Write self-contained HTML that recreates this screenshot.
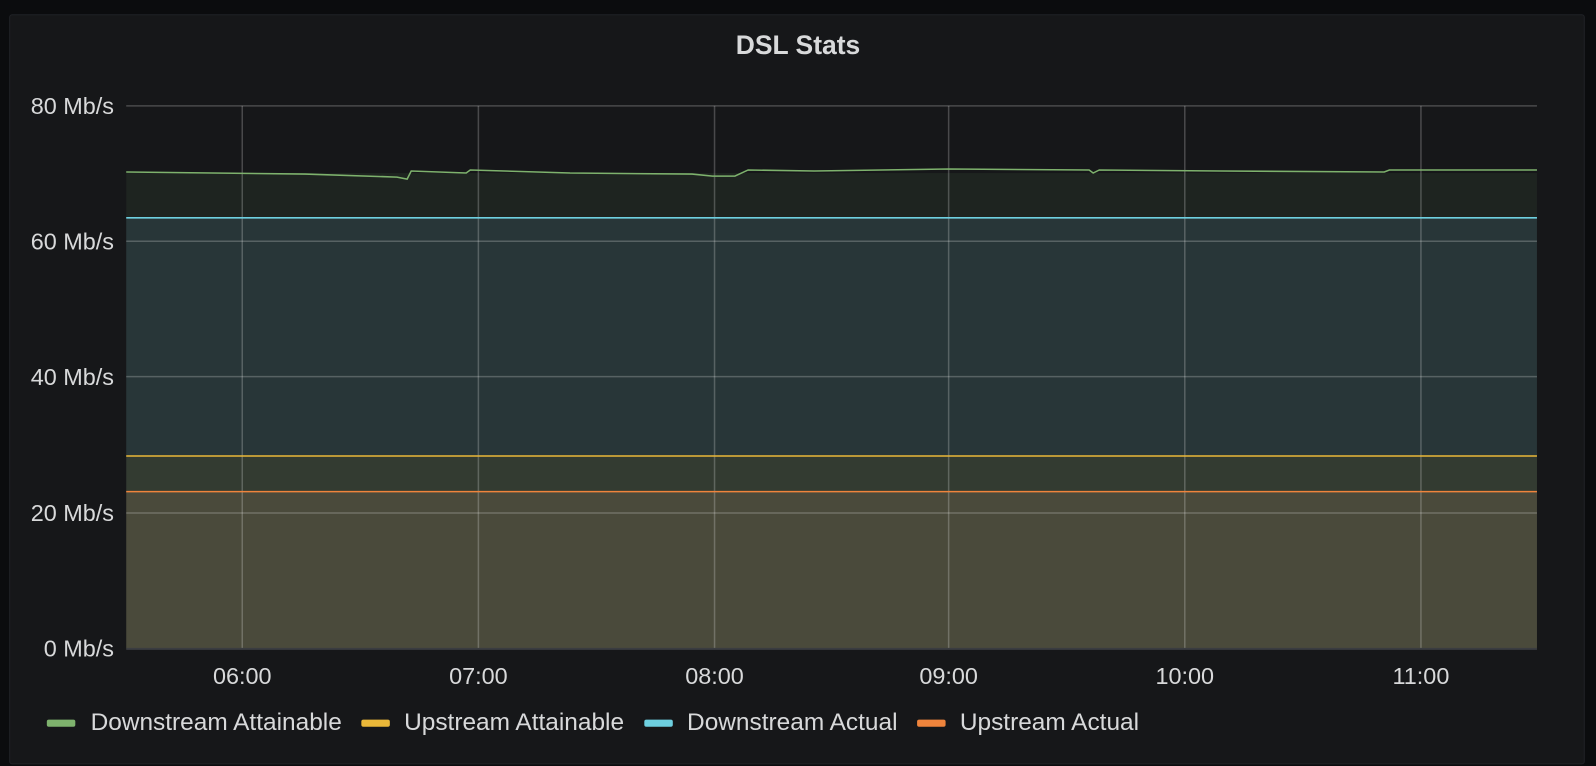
<!DOCTYPE html>
<html><head><style>
body{margin:0;width:1596px;height:766px;background:#0b0c0e;font-family:"Liberation Sans",sans-serif;overflow:hidden;position:relative}
#w{position:absolute;left:0;top:0;width:1568px;height:753px;transform:scale(1.01786);transform-origin:0 0}
.panel{position:absolute;left:9px;top:14px;width:1548px;height:737px;background:#161719;border:1px solid #202226;border-radius:3px;box-sizing:border-box}
.t{position:absolute;color:#d8d9da;font-size:23px;line-height:24px;height:24px;margin-top:-12px}
.y{width:100px;text-align:right;left:12px}
.x{width:100px;text-align:center;margin-left:-50px;top:664px}
.title{position:absolute;top:29px;left:0;width:1568px;text-align:center;color:#d8d9da;font-weight:bold;font-size:26px}
.leg{position:absolute;top:696px;font-size:24px;color:#d8d9da}
.sw{position:absolute;top:707px;width:28px;height:7px;border-radius:2px}
</style></head><body><div id="w">
<div class="panel"></div>
<div class="title">DSL Stats</div>
<svg style="position:absolute;left:0;top:0" width="1568" height="753">
<rect x="124" y="170" width="1386" height="44" fill="#1e2420"/>
<rect x="124" y="214" width="1386" height="234" fill="#283638"/>
<rect x="124" y="448" width="1386" height="35" fill="#333b31"/>
<rect x="124" y="483" width="1386" height="154" fill="#4a4a3b"/>
<g stroke="#ffffff" stroke-opacity="0.22" stroke-width="1.5">
<line x1="124" y1="104" x2="1510" y2="104"/><line x1="124" y1="237" x2="1510" y2="237"/>
<line x1="124" y1="370" x2="1510" y2="370"/><line x1="124" y1="504" x2="1510" y2="504"/>
<line x1="238" y1="104" x2="238" y2="637"/><line x1="470" y1="104" x2="470" y2="637"/>
<line x1="702" y1="104" x2="702" y2="637"/><line x1="932" y1="104" x2="932" y2="637"/>
<line x1="1164" y1="104" x2="1164" y2="637"/><line x1="1396" y1="104" x2="1396" y2="637"/>
</g>
<line x1="124" y1="637.5" x2="1510" y2="637.5" stroke="#3a3c40" stroke-width="2"/>
<polyline fill="none" stroke="#7eb26d" stroke-width="1.5" points="124,169 300,171 390,174 400,176 404,168 458,170 462,167 560,170 680,171 700,173 722,173 735,167 800,168 932,166 1070,167 1074,170 1080,167 1200,168 1360,169 1365,167 1510,167"/>
<line x1="124" y1="214" x2="1510" y2="214" stroke="#6ed0e0" stroke-width="1.5"/>
<line x1="124" y1="448" x2="1510" y2="448" stroke="#eab839" stroke-width="1.5"/>
<line x1="124" y1="483" x2="1510" y2="483" stroke="#ef843c" stroke-width="1.5"/>
</svg>
<div class="t y" style="top:104px">80 Mb/s</div>
<div class="t y" style="top:237px">60 Mb/s</div>
<div class="t y" style="top:370px">40 Mb/s</div>
<div class="t y" style="top:504px">20 Mb/s</div>
<div class="t y" style="top:637px">0 Mb/s</div>
<div class="t x" style="left:238px">06:00</div>
<div class="t x" style="left:470px">07:00</div>
<div class="t x" style="left:702px">08:00</div>
<div class="t x" style="left:932px">09:00</div>
<div class="t x" style="left:1164px">10:00</div>
<div class="t x" style="left:1396px">11:00</div>
<div class="sw" style="left:46px;background:#7eb26d"></div><div class="leg" style="left:89px">Downstream Attainable</div>
<div class="sw" style="left:355px;background:#eab839"></div><div class="leg" style="left:397px">Upstream Attainable</div>
<div class="sw" style="left:633px;background:#6ed0e0"></div><div class="leg" style="left:675px">Downstream Actual</div>
<div class="sw" style="left:901px;background:#ef843c"></div><div class="leg" style="left:943px">Upstream Actual</div>
</div></body></html>
